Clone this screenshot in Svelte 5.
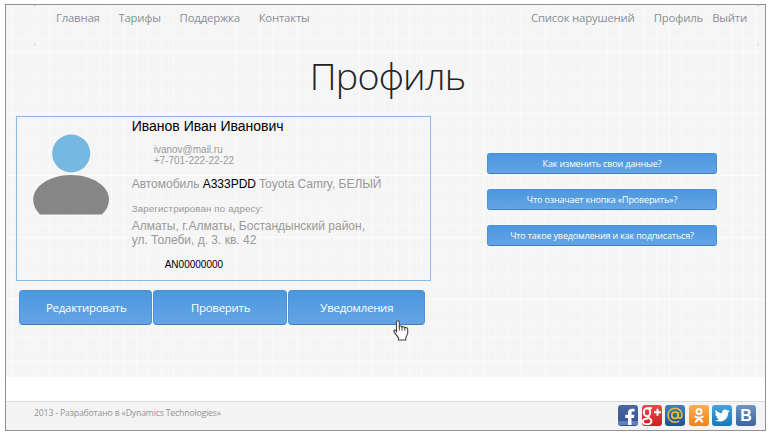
<script>
  const mainNav = ['Главная', 'Тарифы', 'Поддержка', 'Контакты'];
  const actions = ['Редактировать', 'Проверить', 'Уведомления'];
  const questions = [
    'Как изменить свои данные?',
    'Что означает кнопка «Проверить»?',
    'Что такое уведомления и как подписаться?'
  ];
</script>

<div class="page">
  <div class="content">
    <header>
      <nav class="main">
        {#each mainNav as item}<a href="#top">{item}</a>{/each}
      </nav>
      <nav class="user">
        <a class="list" href="#top">Список нарушений</a>
        <a class="profile" href="#top">Профиль</a>
        <a href="#top">Выйти</a>
      </nav>
      <i class="tick t1"></i><i class="tick t2"></i><i class="tick t3"></i><i class="tick t4"></i>
    </header>
    <h1>Профиль</h1>
    <div class="columns">
      <section class="left">
        <div class="card">
          <svg class="avatar" width="78" height="82" viewBox="0 0 78 82">
            <circle cx="38.2" cy="19.5" r="19" fill="#76b8e2" />
            <path d="M7 80.500C2.500 76 .2 71 .2 65.500C.2 52 17 41 38 41S76 52 76 65.500C76 71 73.500 76 69 80.500Z" fill="#868686" />
          </svg>
          <div class="info">
            <div class="name">Иванов Иван Иванович</div>
            <div class="contact">ivanov@mail.ru<br />+7-701-222-22-22</div>
            <div class="car">Автомобиль <b>A333PDD</b> Toyota Camry, БЕЛЫЙ</div>
            <div class="label">Зарегистрирован по адресу:</div>
            <div class="address">Алматы, г.Алматы, Бостандынский район,<br />ул. Толеби, д. 3. кв. 42</div>
            <div class="code">AN00000000</div>
          </div>
        </div>
        <div class="actions">
          {#each actions as label}<button>{label}</button>{/each}
          <svg class="cursor" width="16" height="21" viewBox="0 0 16 21">
            <path d="M3.500 12.500V2.200C3.500.3 6.300.3 6.300 2.200V6.500C7.500 5.700 8.700 6 9 7C10.200 6.300 11.400 6.700 11.700 7.700C13.200 7 14.700 7.800 14.700 9.300V13.500L12.800 17.500V20H5.500V17.800L1.200 12.200C.3 10.400 1.700 9.300 3.500 11Z" fill="#fff" stroke="#444" stroke-width="1.100" />
            <path d="M6.300 6.500V10.500M9 7V10.500M11.800 7.700V10.800" fill="none" stroke="#444" />
          </svg>
        </div>
      </section>
      <section class="questions">
        {#each questions as q}<button>{q}</button>{/each}
      </section>
    </div>
  </div>
  <footer>
    <span>2013 - Разработано в «Dynamics Technologies»</span>
    <div class="social">
      <a class="fb" href="#top" aria-label="Facebook"><svg viewBox="0 0 20 21"><path d="M0 16h20v4H0z" fill="#5f80bb" /><path d="M10 20V13H7.300V9.800H10V8c0-3 1.700-4.300 4.200-4.300h2.300v2.900h-1.500c-1.200 0-1.500.6-1.500 1.500v1.700h2.900l-.4 3.200h-2.500v7z" fill="#fff" /></svg></a>
      <a class="gp" href="#top" aria-label="Google Plus"><svg viewBox="0 0 20 21"><g fill="none" stroke="#fff"><ellipse cx="5" cy="7.200" rx="3.200" ry="4" stroke-width="2" /><path d="M5 3.200H10M7.500 10.500C3.500 13 9.500 13 9.500 16.300C9.500 20.300.5 20 .8 16.500C1 14.500 3.500 13.700 6 13.600" stroke-width="2" /><path d="M12 7.200h7M15.500 3.700v7" stroke-width="2" /></g></svg></a>
      <a class="mail" href="#top" aria-label="Mail"><svg viewBox="0 0 20 21"><g fill="none" stroke="#f6bd32" stroke-width="1.500"><circle cx="10" cy="10.300" r="3.200" /><path d="M13.200 7v4.500c0 2.700 3.800 2.200 3.800-1.200C17 6 14 3.300 10 3.300S3 6.300 3 10.300s3 7 7 7c1.700 0 3-.4 4.300-1.300" /></g></svg></a>
      <a class="ok" href="#top" aria-label="Odnoklassniki"><svg viewBox="0 0 20 21"><g fill="none" stroke="#fff" stroke-width="2" stroke-linecap="round"><circle cx="10" cy="6.500" r="2.500" /><path d="M6.300 11.500c2.300 1.700 5.100 1.700 7.400 0M10 13.300l-3.300 3.400M10 13.300l3.300 3.400" /></g></svg></a>
      <a class="tw" href="#top" aria-label="Twitter"><svg viewBox="1.500 1.500 21.500 21.500"><path d="M20.500 7.200c-.6.300-1.200.5-1.900.6.700-.4 1.200-1 1.400-1.800-.6.400-1.300.6-2.100.8A3.300 3.300 0 0 0 12.300 9.800C9.500 9.700 7.100 8.400 5.500 6.300c-.9 1.500-.4 3.400 1 4.400-.5 0-1-.2-1.500-.4 0 1.600 1.100 2.900 2.600 3.200-.5.100-1 .2-1.500.1.400 1.300 1.600 2.200 3.100 2.300A6.600 6.600 0 0 1 4.300 17.200C10.500 21 19 17.500 18.900 9c.6-.5 1.200-1.100 1.600-1.800z" fill="#fff" /></svg></a>
      <a class="vk" href="#top" aria-label="VKontakte">B</a>
    </div>
  </footer>
</div>

<style>
  :global(body) { background: #fff; }
  * { box-sizing: border-box; }
  .page {
    width: 761px; height: 427px; margin: 4px 0 0 5px;
    border: 1px solid #919191;
    display: flex; flex-direction: column; justify-content: space-between;
    background: #fff; overflow: hidden;
    font-family: 'Open Sans', 'Noto Sans', sans-serif;
  }
  .content {
    height: 372px;
    background-color: #f5f5f5;
    background-image:
      linear-gradient(#fcfcfc 0 1px, transparent 1px),
      linear-gradient(90deg, #fafafa 0 1px, transparent 1px),
      linear-gradient(#f9f9f9 0 1px, transparent 1px),
      linear-gradient(90deg, #f9f9f9 0 1px, transparent 1px);
    background-size: 100% 62px, 62px 100%, 100% 12.400px, 12.400px 100%;
    background-position: 0 46px, 43px 0, 0 46px, 6px 0;
  }
  header {
    position: relative; height: 46px; padding: 5px 18px 0 50px;
    display: flex; justify-content: space-between;
  }
  nav { display: flex; }
  a { text-decoration: none; }
  nav a { font-size: 11.400px; letter-spacing: -.22px; line-height: 16px; color: #87909a; }
  .main { gap: 18.800px; }
  .list { margin-right: 19.200px; }
  .profile { margin-right: 9.200px; }
  .tick { position: absolute; width: 2px; height: 1px; background: #d0d0d0; }
  .t1 { left: 28px; top: 0; }
  .t2 { left: 28px; top: 39px; transform: rotate(45deg); }
  .t3 { right: 6px; top: 0; }
  .t4 { right: 6px; top: 39px; transform: rotate(-45deg); }
  h1 {
    margin: 0; height: 65px; line-height: 49px; text-align: center;
    font-size: 37.600px; letter-spacing: -.75px; font-weight: 300; color: #222; padding-left: 4px;
  }
  .columns { display: flex; }
  .left { width: 426px; padding-left: 10px; }
  .card {
    width: 415px; height: 165px; border: 1px solid #87bae6;
    display: flex; padding: 17px 0 0 16px;
  }
  .info {
    margin: -17px 0 0 20.700px; white-space: nowrap;
    font-family: 'Liberation Sans', Arial, sans-serif; color: #999;
  }
  .name { font-size: 14px; line-height: 18px; color: #000; }
  .contact { font-size: 10px; line-height: 11px; margin: 9px 0 0 22px; }
  .car { font-size: 12px; line-height: 16px; margin-top: 10px; letter-spacing: -.02px; }
  .car b { font-weight: 400; color: #000; }
  .label { font-size: 9.700px; letter-spacing: .15px; line-height: 12px; margin-top: 11px; }
  .address { font-size: 12px; line-height: 14px; margin-top: 4px; }
  .code { font-size: 10px; line-height: 12px; color: #000; margin: 12px 0 0 33px; }
  button {
    padding: 0; border: 1px solid #4c92d8; border-bottom: 1px solid #3f7fc0;
    border-radius: 3px; color: #fff; font-family: inherit; white-space: nowrap;
    background: linear-gradient(#4b98de, #64a4e4);
  }
  .actions { position: relative; display: flex; gap: 1px; padding: 9px 0 0 3px; }
  .actions button { width: 133.400px; height: 35px; padding-left: 1px; padding-bottom: 1px; font-size: 11.400px; letter-spacing: -.23px; border-radius: 4px; }
  .actions button:nth-child(3) { width: 137px; }
  .cursor { position: absolute; left: 377px; top: 39px; }
  .questions { padding: 37px 0 0 55px; display: flex; flex-direction: column; gap: 15px; }
  .questions button { width: 230px; height: 21px; font-size: 9px; letter-spacing: -.16px; line-height: 18px; }
  footer {
    height: 29px; border-top: 1px solid #dadada; background: #f4f4f4;
    padding: 3px 9px 0 28px; display: flex; justify-content: space-between;
  }
  footer span { font-size: 8.700px; letter-spacing: -.17px; line-height: 16px; color: #939393; }
  .social { display: flex; gap: 3.600px; }
  .social a { width: 20px; height: 21px; border-radius: 3px; overflow: hidden; display: block; }
  .social svg { width: 20px; height: 21px; display: block; }
  .fb { background: linear-gradient(#4a67a3, #34528e); }
  .gp { background: linear-gradient(#ec4a48, #cf1c25); }
  .mail { background: linear-gradient(#3d82bd, #1c548f); }
  .ok { background: linear-gradient(#fbae55, #f0821f); }
  .tw { background: linear-gradient(#48a3dc, #1877bb); }
  .vk { background: linear-gradient(#6d95c6, #3c639d); color: #fff; font: bold 16px/21px 'Liberation Sans', sans-serif; text-align: center; }
</style>
